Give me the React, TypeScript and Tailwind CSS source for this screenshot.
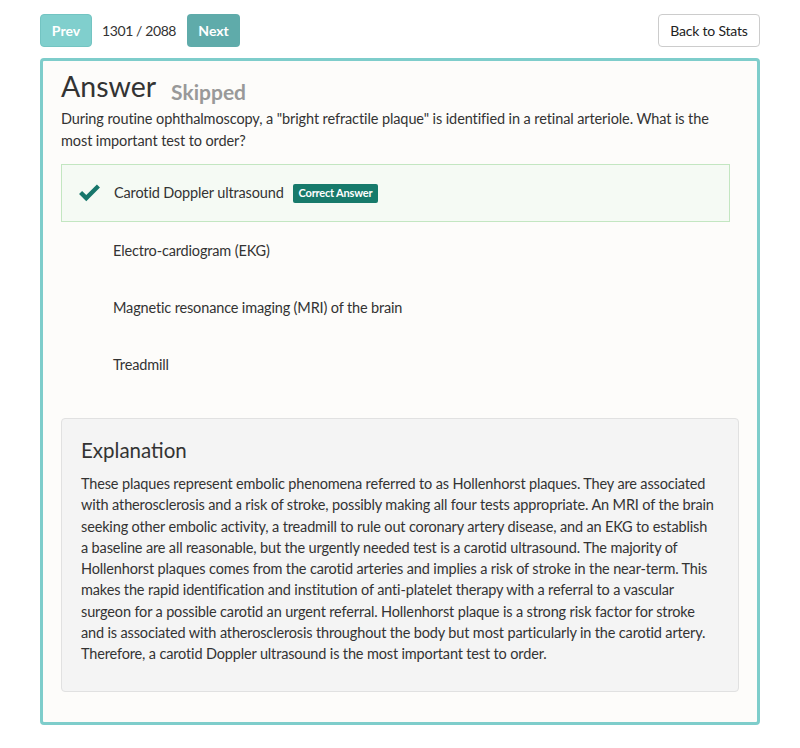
import { useState } from "react";

const options = [
  "Carotid Doppler ultrasound",
  "Electro-cardiogram (EKG)",
  "Magnetic resonance imaging (MRI) of the brain",
  "Treadmill",
];

// broken the same way the original paragraph wraps
const explanation = [
  "These plaques represent embolic phenomena referred to as Hollenhorst plaques. They are associated",
  "with atherosclerosis and a risk of stroke, possibly making all four tests appropriate. An MRI of the brain",
  "seeking other embolic activity, a treadmill to rule out coronary artery disease, and an EKG to establish",
  "a baseline are all reasonable, but the urgently needed test is a carotid ultrasound. The majority of",
  "Hollenhorst plaques comes from the carotid arteries and implies a risk of stroke in the near-term. This",
  "makes the rapid identification and institution of anti-platelet therapy with a referral to a vascular",
  "surgeon for a possible carotid an urgent referral. Hollenhorst plaque is a strong risk factor for stroke",
  "and is associated with atherosclerosis throughout the body but most particularly in the carotid artery.",
  "Therefore, a carotid Doppler ultrasound is the most important test to order.",
];

const CheckIcon = () => (
  <svg viewBox="0 0 24 20" className="w-[23px] h-[19px]" fill="#17766b">
    <path d="M1 10.5 L4.2 7.3 L8.6 11.7 L19.8 0.5 L23 3.7 L8.6 18.1 Z" />
  </svg>
);

const App = () => {
  const [current] = useState(1301);
  const correct = 0;

  return (
    <div className="w-[800px] min-h-[748px] bg-white text-[#333] font-['Lato','Open_Sans',sans-serif]">
      {/* top nav */}
      <div className="flex items-center justify-between pl-10 pr-10 pt-[14px]">
        <div className="flex items-center">
          <button className="h-[33px] w-[52px] rounded-[4px] bg-[#80cfcd] border border-[#73c4c2] text-white font-bold text-[14px]">
            Prev
          </button>
          <span className="ml-[10px] mr-[11px] text-[14px] tracking-[-0.4px]">{current} / 2088</span>
          <button className="h-[33px] w-[53px] rounded-[4px] bg-[#5fabaa] text-white font-bold text-[14px]">
            Next
          </button>
        </div>
        <button className="h-[33px] w-[102px] rounded-[4px] bg-white border border-[#ccc] text-[14px] tracking-[-0.2px] text-[#222]">
          Back to Stats
        </button>
      </div>

      {/* answer card */}
      <div className="mx-10 mt-[11px] border-[3px] border-[#7ecdcb] rounded-[4px] bg-[#fdfcfa] pl-[18px] pr-[18px] pt-[8px] pb-[30px]">
        <div className="flex items-end">
          <h1 className="text-[28.5px] leading-[34px] text-[#333]">Answer</h1>
          <span className="ml-[15px] mb-[-4px] text-[21px] font-bold text-[#999]">Skipped</span>
        </div>
        <p className="mt-[5px] pr-[12px] text-[14.5px] leading-[22px] tracking-[-0.1px]">
          During routine ophthalmoscopy, a "bright refractile plaque" is identified in a retinal arteriole. What is the
          most important test to order?
        </p>

        <div className="mt-[12px] mr-[9px] flex flex-col">
          {options.map((opt, i) =>
            i === correct ? (
              <div
                key={opt}
                className="h-[58px] flex items-center border border-[#c3e6c1] bg-[#f5faf4] pl-[16px]"
              >
                <CheckIcon />
                <span className="ml-[13px] text-[14.5px] tracking-[-0.15px]">{opt}</span>
                <span className="ml-[9px] px-[6px] h-[19px] flex items-center rounded-[2px] bg-[#177a6b] text-white text-[11px] font-bold tracking-[-0.2px]">
                  Correct Answer
                </span>
              </div>
            ) : (
              <div key={opt} className="h-[57px] flex items-center pl-[52px] text-[14.5px] tracking-[-0.15px]">
                {opt}
              </div>
            )
          )}
        </div>

        <div className="mt-[25px] border border-[#e1e1e1] rounded-[4px] bg-[#f4f4f4] pl-[19px] pr-[10px] pt-[17px] pb-[26px]">
          <h2 className="text-[20.5px] leading-[28px] text-[#333]">Explanation</h2>
          <p className="mt-[9px] text-[14.5px] leading-[21.3px] tracking-[-0.15px] text-[#333]">
            {explanation.map((line) => (
              <span key={line} className="block whitespace-nowrap">
                {line}
              </span>
            ))}
          </p>
        </div>
      </div>
    </div>
  );
};

export default App;
